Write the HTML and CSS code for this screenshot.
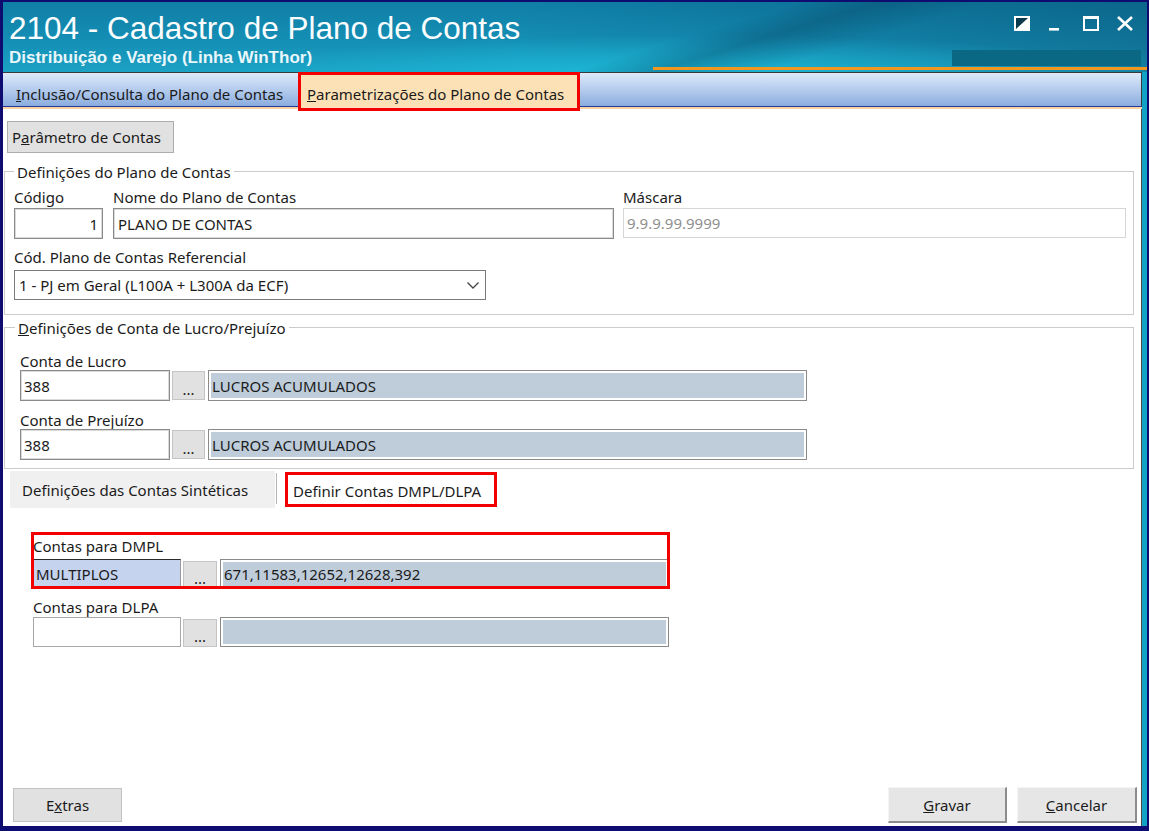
FILE: index.html
```html
<!DOCTYPE html>
<html lang="pt-BR">
<head>
    <meta charset="UTF-8">
    <title>2104 - Cadastro de Plano de Contas</title>
    <link rel="stylesheet" href="styles.css">
</head>
<body>
<div class="window">
    <div class="frame">
        <div class="titlebar">
            <div class="title-row">
                <h1 class="app-title">2104 - Cadastro de Plano de Contas</h1>
                <svg class="win-controls" width="130" height="20" viewBox="0 0 130 20">
                    <!-- sempre visível -->
                    <rect x="5" y="4" width="14" height="13" fill="#fff" stroke="#fff" stroke-width="2"/>
                    <polygon points="6,5 18,5 6,16" fill="#0b3a4c"/>
                    <!-- minimizar -->
                    <rect x="39" y="15" width="10" height="2.6" fill="#fff"/>
                    <!-- maximizar -->
                    <rect x="74" y="4" width="14" height="13" fill="none" stroke="#fff" stroke-width="2"/>
                    <rect x="73" y="3" width="16" height="3" fill="#fff"/>
                    <!-- fechar -->
                    <path d="M108 4 L122 17 M122 4 L108 17" stroke="#fff" stroke-width="2.6"/>
                </svg>
            </div>
            <div class="subtitle-row">
                <div class="app-subtitle">Distribuição e Varejo (Linha WinThor)</div>
                <div class="title-panel"></div>
            </div>
            <div class="title-accent"></div>
        </div>

        <div class="tabstrip-wrap">
            <div class="tabstrip">
                <div class="tab"><u>I</u>nclusão/Consulta do Plano de Contas</div>
                <div class="tab tab-active"><u>P</u>arametrizações do Plano de Contas</div>
            </div>
        </div>

        <div class="page">
            <button class="btn btn-param" type="button">P<u>a</u>râmetro de Contas</button>

            <div class="group group-plano">
                <div class="group-title">Definições do Plano de Contas</div>
                <div class="field-row">
                    <div class="field field-codigo">
                        <div class="field-label">Código</div>
                        <div class="input text-right">1</div>
                    </div>
                    <div class="field field-nome">
                        <div class="field-label">Nome do Plano de Contas</div>
                        <div class="input">PLANO DE CONTAS</div>
                    </div>
                    <div class="field field-mascara">
                        <div class="field-label">Máscara</div>
                        <div class="input input-disabled">9.9.9.99.9999</div>
                    </div>
                </div>
                <div class="field-row row-ref">
                    <div class="field field-ref">
                        <div class="field-label">Cód. Plano de Contas Referencial</div>
                        <div class="input select">
                            <span>1 - PJ em Geral (L100A + L300A da ECF)</span>
                            <svg width="14" height="10" viewBox="0 0 14 10">
                                <path d="M1.5 2.5 L7 8 L12.5 2.5" fill="none" stroke="#444" stroke-width="1.3"/>
                            </svg>
                        </div>
                    </div>
                </div>
            </div>

            <div class="group group-lucro">
                <div class="group-title"><u>D</u>efinições de Conta de Lucro/Prejuízo</div>
                <div class="field">
                    <div class="field-label">Conta de Lucro</div>
                    <div class="lookup">
                        <div class="input lookup-code">388</div>
                        <div class="dots">...</div>
                        <div class="desc"><div class="desc-fill">LUCROS ACUMULADOS</div></div>
                    </div>
                </div>
                <div class="field field-prejuizo">
                    <div class="field-label">Conta de Prejuízo</div>
                    <div class="lookup">
                        <div class="input lookup-code">388</div>
                        <div class="dots">...</div>
                        <div class="desc"><div class="desc-fill">LUCROS ACUMULADOS</div></div>
                    </div>
                </div>
            </div>

            <div class="subtabs">
                <div class="subtab">Definições das Contas Sintéticas</div>
                <div class="subtab-sep"></div>
                <div class="subtab subtab-active">Definir Contas DMPL/DLPA</div>
            </div>

            <div class="dm-block marked">
                <div class="field-label">Contas para DMPL</div>
                <div class="lookup lookup-dm">
                    <div class="input lookup-code input-selected">MULTIPLOS</div>
                    <div class="dots">...</div>
                    <div class="desc"><div class="desc-fill">671,11583,12652,12628,392</div></div>
                </div>
            </div>

            <div class="dm-block dm-dlpa">
                <div class="field-label">Contas para DLPA</div>
                <div class="lookup lookup-dm">
                    <div class="input lookup-code"></div>
                    <div class="dots">...</div>
                    <div class="desc"><div class="desc-fill"></div></div>
                </div>
            </div>

            <div class="spacer"></div>

            <div class="footer">
                <button class="btn btn-extras" type="button">E<u>x</u>tras</button>
                <button class="btn btn-3d btn-gravar" type="button"><u>G</u>ravar</button>
                <button class="btn btn-3d" type="button"><u>C</u>ancelar</button>
            </div>
        </div>
    </div>
</div>
</body>
</html>
```

FILE: styles.css
```css
body {
    margin: 0;
    font-family: "Noto Sans", "Open Sans", sans-serif;
    font-size: 15px;
    color: #1b1b1b;
    background: #fff;
}

.window {
    width: 1149px;
    height: 831px;
    box-sizing: border-box;
    background-color: #0e0c70;
    padding: 2px 2px 5px 3px;
    display: flex;
    overflow: hidden;
}

.frame {
    flex: 1;
    display: flex;
    flex-direction: column;
    background-color: #12a2c6;
}

/* title bar */
.titlebar {
    height: 70px;
    flex-shrink: 0;
    display: flex;
    flex-direction: column;
    color: #fff;
    background:
        linear-gradient(163deg, rgba(0, 0, 0, 0) 58%, rgba(6, 70, 100, 0.35) 64%, rgba(0, 0, 0, 0) 72%),
        radial-gradient(60% 90% at 60% 110%, rgba(30, 196, 226, 0.8) 0%, rgba(30, 196, 226, 0) 70%),
        linear-gradient(90deg, rgba(0, 0, 0, 0) 45%, rgba(0, 40, 70, 0.28) 100%),
        linear-gradient(180deg, #107ea6 0%, #1590b6 60%, #1ba2c4 100%);
}

.title-row {
    height: 44px;
    display: flex;
    justify-content: space-between;
    align-items: flex-start;
}

.app-title {
    margin: 8px 0 0 6px;
    font: 400 31.5px/36px "Liberation Sans", Arial, sans-serif;
    color: #fbfdff;
}

.win-controls {
    margin: 11px 7px 0 0;
}

.subtitle-row {
    height: 21px;
    display: flex;
    justify-content: space-between;
    align-items: flex-start;
}

.app-subtitle {
    margin: 2px 0 0 6px;
    font: 700 17px/20px "Liberation Sans", Arial, sans-serif;
    color: #e9f6fb;
}

.title-panel {
    width: 189px;
    height: 16px;
    margin: 4px 6px 0 0;
    background-color: #0b6884;
}

.title-accent {
    height: 3px;
    margin-left: 650px;
    background-color: #f1961f;
}

/* main tabs */
.tabstrip-wrap {
    margin-right: 5px;
    border-bottom: 2px solid #fbd4a4;
}

.tabstrip {
    height: 33px;
    display: flex;
    align-items: flex-start;
    border-top: 1px solid #3a3a3a;
    border-right: 1px solid #3a3a3a;
    border-bottom: 1px solid #24389c;
    background: linear-gradient(180deg, #dde9f9 0%, #b9cfef 45%, #8badde 100%);
}

.tab {
    width: 295px;
    box-sizing: border-box;
    padding: 12px 0 0 13px;
    line-height: 18px;
    color: #1a1a1a;
    white-space: nowrap;
}

.tab-active {
    position: relative;
    z-index: 1;
    width: 282px;
    height: 39px;
    margin-top: -1px;
    padding: 10px 0 0 6px;
    border: 3px solid #f20000;
    background-color: #fde1b6;
}

/* page body */
.page {
    flex: 1;
    display: flex;
    flex-direction: column;
    margin-right: 5px;
    background-color: #fff;
    border-right: 1px solid #4a4a4a;
}

.btn {
    box-sizing: border-box;
    font-family: inherit;
    font-size: 15px;
    color: #1b1b1b;
    background-color: #e1e1e1;
    border: 1px solid #adadad;
    padding: 0;
    cursor: pointer;
}

.btn-param {
    align-self: flex-start;
    width: 167px;
    height: 32px;
    margin: 12px 0 0 4px;
    padding-left: 4px;
    text-align: left;
}

.group {
    width: 1130px;
    box-sizing: border-box;
    margin-left: 1px;
    border: 1px solid #cbcbcb;
    display: flex;
    flex-direction: column;
}

.group-title {
    align-self: flex-start;
    margin-top: -9px;
    padding: 0 3px;
    line-height: 18px;
    background-color: #fff;
}

.group-plano {
    margin-top: 18px;
    padding: 0 0 14px 9px;
}

.group-plano .field-row {
    margin-top: 7px;
}

.group-plano .row-ref {
    margin-top: 9px;
}

.field-row {
    display: flex;
}

.field-label {
    line-height: 18px;
    white-space: nowrap;
}

.group-plano .input {
    margin-top: 2px;
}

.field-codigo { width: 89px; }
.field-nome { width: 501px; margin-left: 10px; }
.field-mascara { width: 503px; margin-left: 9px; }
.field-ref { width: 472px; }

.input {
    box-sizing: border-box;
    height: 31px;
    padding: 0 4px;
    display: flex;
    align-items: center;
    white-space: nowrap;
    overflow: hidden;
    background-color: #fff;
    border: 1px solid #8a8a8a;
    box-shadow: inset 0 0 0 1px #dadada;
}

.text-right {
    justify-content: flex-end;
}

.input-disabled {
    height: 30px;
    padding-left: 3px;
    color: #8f8f8f;
    border-color: #d6d6d6;
    box-shadow: none;
}

.group-plano .select {
    height: 30px;
    margin-top: 4px;
    justify-content: space-between;
    padding-right: 5px;
    border-color: #7a7a7a;
    box-shadow: none;
}

.group-lucro {
    margin-top: 12px;
    padding: 0 0 8px 15px;
}

.group-lucro .group-title {
    margin-left: -5px;
}

.group-lucro .field {
    margin-top: 15px;
}

.group-lucro .field-prejuizo {
    margin-top: 10px;
}

/* code + "..." + description lookups */
.lookup {
    display: flex;
    align-items: flex-start;
}

.lookup-code {
    width: 150px;
    padding-left: 3px;
}

.dots {
    box-sizing: border-box;
    width: 33px;
    height: 29px;
    margin: 1px 0 0 2px;
    display: flex;
    justify-content: center;
    align-items: flex-end;
    padding-bottom: 2px;
    line-height: 16px;
    background-color: #e1e1e1;
    border: 1px solid #c4c4c4;
}

.desc {
    box-sizing: border-box;
    width: 599px;
    height: 31px;
    margin-left: 3px;
    padding: 2px;
    background-color: #fff;
    border: 1px solid #8a8a8a;
}

.desc-fill {
    height: 100%;
    padding-left: 1px;
    display: flex;
    align-items: center;
    white-space: nowrap;
    background-color: #bfcddb;
}

/* inner tabs */
.subtabs {
    height: 37px;
    margin: 2px 0 0 7px;
    display: flex;
    align-items: flex-start;
}

.subtab {
    box-sizing: border-box;
    width: 265px;
    height: 37px;
    padding: 10px 0 0 12px;
    line-height: 18px;
    white-space: nowrap;
    background-color: #f0f0f0;
}

.subtab-sep {
    width: 1px;
    height: 31px;
    margin: 2px 0 0 1px;
    background-color: #b8b8b8;
}

.subtab-active {
    width: 212px;
    height: 35px;
    margin: 1px 0 0 8px;
    padding: 7px 0 0 5px;
    border: 3px solid #f20000;
    background-color: #fff;
}

.dm-block {
    width: 636px;
    margin: 29px 0 0 30px;
}

.dm-dlpa {
    margin-top: 9px;
}

.lookup-dm {
    margin-top: 4px;
}

.dm-dlpa .lookup-dm {
    margin-top: 1px;
}

.lookup-dm .input {
    width: 148px;
    height: 30px;
    padding-left: 2px;
    border-color: #a8a8a8;
    box-shadow: none;
}

.lookup-dm .dots {
    width: 34px;
    height: 28px;
    margin-top: 2px;
}

.lookup-dm .desc {
    width: 449px;
    height: 30px;
}

.lookup-dm .input-selected {
    background-color: #c5d3ef;
    border-color: #2a2a2a #9a9a9a #9a9a9a #2a2a2a;
}

/* red frame drawn over the DMPL fields */
.marked {
    position: relative;
}

.marked::after {
    content: "";
    position: absolute;
    top: -5px;
    bottom: 0;
    left: -2px;
    right: -1px;
    border: 3px solid #f20000;
    pointer-events: none;
}

.spacer {
    flex: 1;
}

.footer {
    display: flex;
    align-items: flex-end;
    padding: 0 4px 3px 10px;
}

.btn-extras {
    width: 109px;
    height: 34px;
    margin-bottom: 1px;
    border-color: #c2c2c2;
}

.btn-3d {
    width: 120px;
    height: 36px;
    margin-left: 10px;
    background-color: #e6e6e6;
    border-style: solid;
    border-width: 1px 2px 2px 1px;
    border-color: #f4f4f4 #8c8c8c #8c8c8c #f4f4f4;
}

.btn-gravar {
    width: 119px;
    margin-left: auto;
}
```
